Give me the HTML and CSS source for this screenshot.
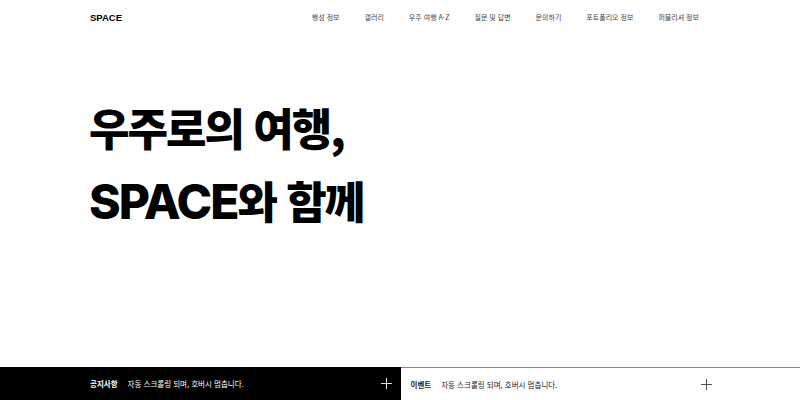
FILE: index.html
```html
<!DOCTYPE html>
<html lang="ko">
<head>
<meta charset="utf-8">
<link rel="stylesheet" href="styles.css">
</head>
<body>
<div class="page">
  <header class="header">
    <div class="logo">SPACE</div>
    <nav class="nav">
      <a>행성 정보</a>
      <a>갤러리</a>
      <a>우주 여행 A-Z</a>
      <a>질문 및 답변</a>
      <a>문의하기</a>
      <a>포트폴리오 정보</a>
      <a>퍼블리셔 정보</a>
    </nav>
  </header>
  <main class="hero">
    <h1 class="title">
      <span class="line">우주로의 여행,</span>
      <span class="line"><span class="latin">SPACE</span>와 함께</span>
    </h1>
  </main>
  <footer class="bar">
    <div class="half dark">
      <div class="item">
        <strong>공지사항</strong>
        <span>자동 스크롤링 되며, 호버시 멈춥니다.</span>
      </div>
      <span class="plus"></span>
    </div>
    <div class="half light">
      <div class="item">
        <strong>이벤트</strong>
        <span>자동 스크롤링 되며, 호버시 멈춥니다.</span>
      </div>
      <span class="plus"></span>
    </div>
  </footer>
</div>
</body>
</html>
```
FILE: styles.css
```css
* { box-sizing: border-box; margin: 0; padding: 0; }
html, body { width: 800px; height: 400px; overflow: hidden; background: #fff; }
body { font-family: "Liberation Sans", "Noto Sans CJK KR", sans-serif; color: #111; }
.page { display: flex; flex-direction: column; height: 400px; }
.header {
  display: flex; align-items: center; justify-content: space-between;
  height: 34px; padding: 0 101px 0 90px;
}
.logo { font-size: 9.5px; font-weight: 700; color: #000; }
.nav { display: flex; gap: 25px; }
.nav a { font-family: "Noto Sans CJK KR", sans-serif; font-size: 7px; color: #444; }
.hero { flex: 1; padding: 57px 0 0 89px; }
.title {
  display: flex; flex-direction: column;
  font-family: "Noto Sans CJK KR", sans-serif;
  font-weight: 900; font-size: 44px; line-height: 73px; color: #000;
  letter-spacing: -2px;
}
.latin {
  font-family: "Inter", "Liberation Sans", sans-serif;
  font-weight: 800; font-size: 48px; letter-spacing: -2px;
}
.bar { display: flex; height: 33px; }
.half { flex: 1; display: flex; align-items: center; justify-content: space-between; }
.dark { background: #000; color: #fff; padding: 0 9px 0 90px; }
.light { background: #fff; color: #222; border-top: 1px solid #888; padding: 0 88px 0 10px; }
.item { display: flex; align-items: center; gap: 10px; font-family: "Noto Sans CJK KR", sans-serif; font-size: 7.5px; }
.item strong { font-weight: 700; }
.plus { position: relative; width: 11px; height: 11px; }
.plus::before, .plus::after { content: ""; position: absolute; background: currentColor; }
.plus::before { left: 5px; top: 0; width: 1px; height: 11px; }
.plus::after { top: 5px; left: 0; width: 11px; height: 1px; }
.dark .plus { color: #ddd; }
.light .plus { color: #555; }
```
